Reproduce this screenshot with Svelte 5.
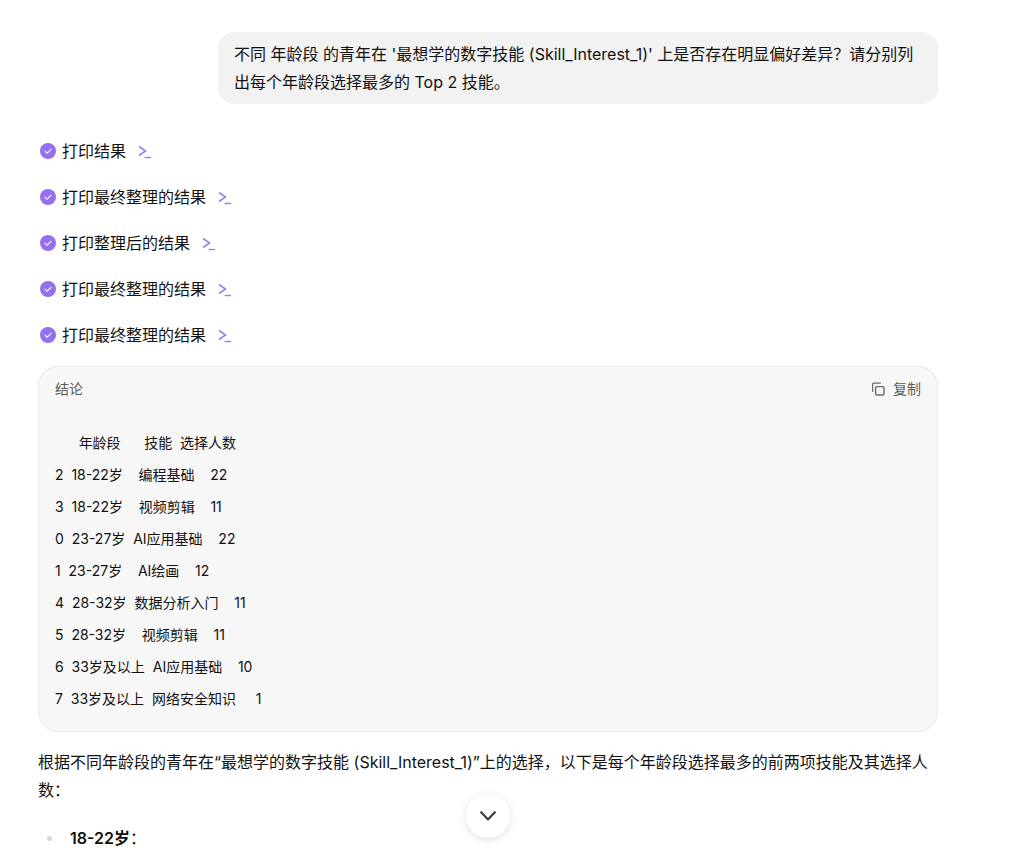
<script>
  const steps = ['打印结果', '打印最终整理的结果', '打印整理后的结果', '打印最终整理的结果', '打印最终整理的结果'];
  const rows = [
    '      年龄段      技能  选择人数',
    '2  18-22岁    编程基础    22',
    '3  18-22岁    视频剪辑    11',
    '0  23-27岁  AI应用基础    22',
    '1  23-27岁    AI绘画    12',
    '4  28-32岁  数据分析入门    11',
    '5  28-32岁    视频剪辑    11',
    '6  33岁及以上  AI应用基础    10',
    '7  33岁及以上  网络安全知识     1'
  ];
</script>

<div class="page">
  <main class="thread">
    <div class="bubble">不同 年龄段 的青年在 '最想学的数字技能 (Skill_Interest_1)' 上是否存在明显偏好差异？请分别列出每个年龄段选择最多的 Top 2 技能。</div>

    <ul class="steps">
      {#each steps as s}
        <li class="step">
          <svg class="check" viewBox="0 0 16 16" width="16" height="16" aria-hidden="true">
            <circle cx="8" cy="8" r="8" fill="#9370ee" />
            <path d="M5 8.2l2.1 2 3.9-4" fill="none" stroke="#e6defb" stroke-width="1.3" stroke-linecap="round" stroke-linejoin="round" />
          </svg>
          <span>{s}</span>
          <svg class="term" viewBox="0 0 14 14" width="14" height="14" aria-hidden="true">
            <path d="M1 1.5l6.5 4.5-6.5 4.5" fill="none" stroke="#9d7df0" stroke-width="1.6" />
            <path d="M6.5 12.5h6.5" fill="none" stroke="#9d7df0" stroke-width="1.4" />
          </svg>
        </li>
      {/each}
    </ul>

    <section class="card">
      <header class="card-head">
        <span>结论</span>
        <span class="copy">
          <svg viewBox="0 0 14 14" width="14" height="14" aria-hidden="true">
            <path d="M1.6 10V2.2a1 1 0 0 1 1-1h7.2" fill="none" stroke="#6b6b66" stroke-width="1.2" />
            <rect x="4.6" y="4.6" width="8.4" height="8.4" rx="1.2" fill="none" stroke="#6b6b66" stroke-width="1.4" />
          </svg>
          复制
        </span>
      </header>
      <div class="rows">
        {#each rows as r}<div class="row">{r}</div>{/each}
      </div>
    </section>

    <p class="para">根据不同年龄段的青年在“最想学的数字技能 (Skill_Interest_1)”上的选择，以下是每个年龄段选择最多的前两项技能及其选择人数：</p>

    <ul class="bullets">
      <li><strong>18-22岁</strong>：</li>
    </ul>
  </main>

  <button class="down" aria-label="滚动到底部">
    <svg viewBox="0 0 16 10" width="16" height="10"><path d="M1.2 1.2L8 8.4l6.8-7.2" fill="none" stroke="#3c3c38" stroke-width="2.2" stroke-linecap="round" stroke-linejoin="round" /></svg>
  </button>
</div>

<style>
  :global(body) {
    margin: 0;
    background: #fff;
    overflow: hidden;
  }
  .page {
    position: relative;
    height: 852px;
    overflow: hidden;
    font-family: Inter, "Noto Sans CJK SC", sans-serif;
    color: #111;
    font-size: 16px;
  }
  .thread {
    width: 900px;
    margin-left: 38px;
    padding-top: 32px;
    display: flex;
    flex-direction: column;
  }
  .bubble {
    align-self: flex-end;
    box-sizing: border-box;
    width: 720px;
    padding: 8px 16px;
    background: #f2f2f2;
    border-radius: 16px;
    line-height: 28px;
  }
  .steps {
    list-style: none;
    margin: 35px 0 0;
    padding: 0 0 0 2px;
    display: flex;
    flex-direction: column;
    gap: 22px;
  }
  .step {
    display: flex;
    align-items: center;
    height: 24px;
    line-height: 24px;
  }
  .check { margin-right: 6px; flex: none; }
  .term { margin-left: 12px; margin-top: 1px; flex: none; }
  .card {
    margin-top: 19px;
    height: 366px;
    box-sizing: border-box;
    background: #f7f7f7;
    border: 1px solid #e9e9e9;
    border-radius: 20px;
    padding: 0 16px;
  }
  .card-head {
    display: flex;
    justify-content: space-between;
    align-items: center;
    height: 44px;
    font-size: 14px;
    line-height: 20px;
    color: #5c5c52;
  }
  .copy {
    display: flex;
    align-items: center;
    gap: 8px;
  }
  .rows {
    padding-top: 16px;
    font-size: 14px;
  }
  .row {
    height: 32px;
    line-height: 32px;
    white-space: pre;
  }
  .para {
    margin: 16px 0 0;
    line-height: 28px;
  }
  .bullets {
    list-style: none;
    margin: 20px 0 0;
    padding: 0 0 0 32px;
    line-height: 28px;
  }
  .bullets li { position: relative; }
  .bullets li::before {
    content: "";
    position: absolute;
    left: -23px;
    top: 12px;
    width: 5px;
    height: 5px;
    border-radius: 50%;
    background: #d8d8e0;
  }
  strong { font-weight: 600; }
  .down {
    position: absolute;
    left: 466px;
    top: 794px;
    width: 44px;
    height: 44px;
    padding: 0;
    border: none;
    border-radius: 50%;
    background: #fff;
    box-shadow: 0 2px 10px rgba(0, 0, 0, 0.12);
    display: flex;
    align-items: center;
    justify-content: center;
  }
</style>
